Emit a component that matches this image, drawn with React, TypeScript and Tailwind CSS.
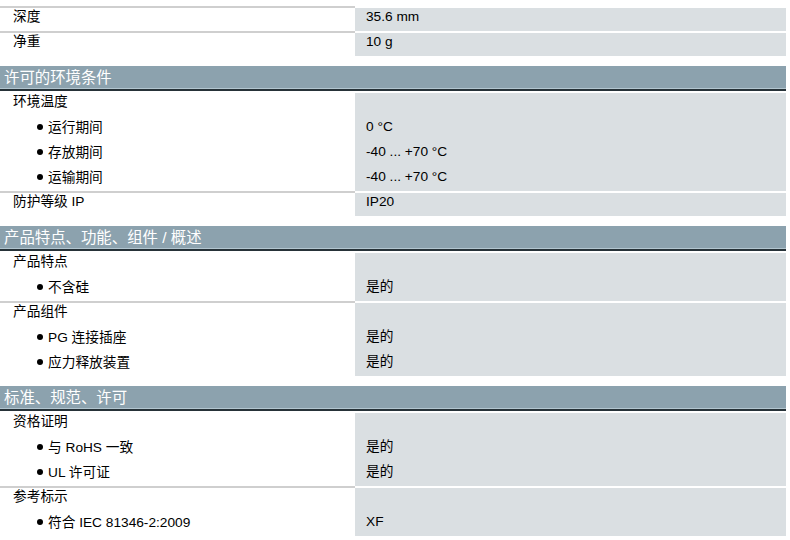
import React from "react";

type Line = { label: string; bullet?: boolean; value?: string };
type Group = Line[];
type Section = { title?: string; groups: Group[] };

const sections: Section[] = [
  {
    groups: [
      [{ label: "深度", value: "35.6 mm" }],
      [{ label: "净重", value: "10 g" }],
    ],
  },
  {
    title: "许可的环境条件",
    groups: [
      [
        { label: "环境温度" },
        { label: "运行期间", bullet: true, value: "0 °C" },
        { label: "存放期间", bullet: true, value: "-40 ... +70 °C" },
        { label: "运输期间", bullet: true, value: "-40 ... +70 °C" },
      ],
      [{ label: "防护等级 IP", value: "IP20" }],
    ],
  },
  {
    title: "产品特点、功能、组件 / 概述",
    groups: [
      [{ label: "产品特点" }, { label: "不含硅", bullet: true, value: "是的" }],
      [
        { label: "产品组件" },
        { label: "PG 连接插座", bullet: true, value: "是的" },
        { label: "应力释放装置", bullet: true, value: "是的" },
      ],
    ],
  },
  {
    title: "标准、规范、许可",
    groups: [
      [
        { label: "资格证明" },
        { label: "与 RoHS 一致", bullet: true, value: "是的" },
        { label: "UL 许可证", bullet: true, value: "是的" },
      ],
      [
        { label: "参考标示" },
        { label: "符合 IEC 81346-2:2009", bullet: true, value: "XF" },
      ],
    ],
  },
];

function GroupRow({ lines, afterHeader }: { lines: Group; afterHeader: boolean }) {
  return (
    <div className="flex">
      <div
        className={
          "w-[355px] border-t-2 flex flex-col " +
          (afterHeader ? "border-white" : "border-[#cfcfcf]")
        }
      >
        {lines.map((l, i) => (
          <div key={i} className="h-[25px] last:h-[23px] leading-[17px] flex items-start">
            {l.bullet ? (
              <div className="flex items-center pl-[37px] h-[18px]">
                <span className="block shrink-0 w-[6px] h-[6px] rounded-full bg-black" />
                <span className="ml-[5px] leading-[17px]">{l.label}</span>
              </div>
            ) : (
              <span className="pl-[13px]">{l.label}</span>
            )}
          </div>
        ))}
      </div>
      <div className="w-[431px] border-t-2 border-white bg-[#dadfe2] flex flex-col pl-[11px]">
        {lines.map((l, i) => (
          <div key={i} className="h-[25px] last:h-[23px] leading-[17px]">
            {l.value ?? ""}
          </div>
        ))}
      </div>
    </div>
  );
}

export default function App() {
  return (
    <div
      className="w-[790px] h-[540px] bg-white overflow-hidden text-black text-[13.7px]"
      style={{ fontFamily: '"Liberation Sans", "Noto Sans CJK SC", Arial, sans-serif' }}
    >
      <div className="w-[786px] pt-[6px] flex flex-col">
        {sections.map((s, si) => (
          <div key={si} className={si > 0 ? "mt-[10px]" : ""}>
            {s.title && (
              <div className="flex flex-col">
                <div className="h-[22px] bg-[#8ca2ae] text-white text-[15.4px] leading-[23px] pl-[4px]">
                  {s.title}
                </div>
                <div className="h-px bg-[#b3c6d0]" />
                <div className="h-[2px] bg-[#263238]" />
              </div>
            )}
            {s.groups.map((g, gi) => (
              <GroupRow key={gi} lines={g} afterHeader={!!s.title && gi === 0} />
            ))}
          </div>
        ))}
      </div>
    </div>
  );
}
